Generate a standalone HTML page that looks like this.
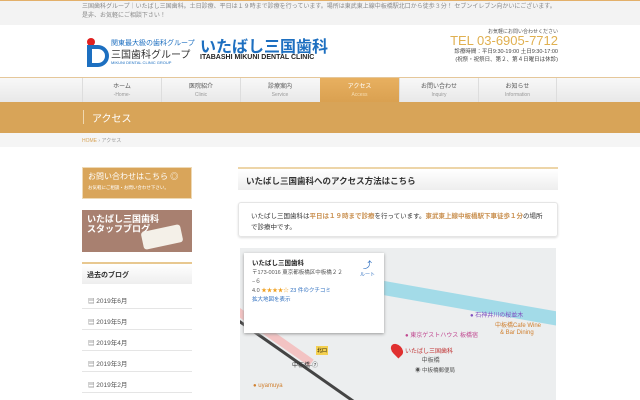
<!DOCTYPE html>
<html style="overflow:hidden"><head><meta charset="utf-8"><style>
*{margin:0;padding:0;box-sizing:border-box}
html,body{width:640px;height:400px;overflow:hidden}
body{background:#fff;font-family:"Liberation Sans","Noto Sans CJK JP",sans-serif;position:relative}
.a{position:absolute}
.top{left:0;top:0;width:640px;height:25px;background:#f3f3f3;font-size:6px;color:#888;padding:3px 0 0 82px;line-height:9px}
.nav{left:0;top:77px;width:640px;height:25px;background:linear-gradient(#f8f8f8,#e8e8e8);border-top:1px solid #e5c79a}
.ni{position:absolute;top:0;width:79px;height:25px;border-left:1px solid #ddd;text-align:center;font-size:6px;color:#555;padding-top:5px;line-height:8px}
.ni small{display:block;font-size:5px;color:#999}
.ban{left:0;top:102px;width:640px;height:31px;background:#d8a458}
.li{left:82px;width:110px;height:21px;border-bottom:1px solid #e5e5e5;font-size:6.5px;color:#555;padding:7px 0 0 6px}
</style></head><body>
<div class="a top">三国歯科グループ｜いたばし三国歯科。土日診療、平日は１９時まで診療を行っています。場所は東武東上線中板橋駅北口から徒歩３分！ セブンイレブン向かいにございます。<br>是非、お気軽にご相談下さい！</div>
<div class="a" style="left:0;top:0;width:640px;height:1px;background:#e3b06a"></div>
<div class="a" style="left:87px;top:38px;width:8px;height:8px;border-radius:50%;background:#e02020"></div>
<div class="a" style="left:87px;top:45px;width:22px;height:22px;border:4px solid #1d6fc0;border-radius:0 11px 11px 0;border-left-width:5px"></div>
<div class="a" style="left:111px;top:38px;font-size:7px;color:#1d6fc0">関東最大級の歯科グループ</div>
<div class="a" style="left:111px;top:46px;font-size:10px;color:#333">三国歯科グループ</div>
<div class="a" style="left:111px;top:60px;font-size:4px;color:#1d6fc0">MIKUNI DENTAL CLINIC GROUP</div>
<div class="a" style="left:200px;top:33px;font-size:16px;font-weight:bold;color:#1d6fc0">いたばし三国歯科</div>
<div class="a" style="left:200px;top:54px;font-size:7px;font-weight:bold;color:#222">ITABASHI MIKUNI DENTAL CLINIC</div>
<div class="a" style="left:470px;top:28px;width:88px;text-align:right;font-size:5px;color:#555">お気軽にお問い合わせください</div>
<div class="a" style="left:430px;top:33px;width:128px;text-align:right;font-size:13px;color:#e0b050">TEL 03-6905-7712</div>
<div class="a" style="left:420px;top:48px;width:138px;text-align:right;font-size:5.5px;color:#444;line-height:8px">診療時間：平日9:30-19:00 土日9:30-17:00<br>(祝祭・祝祭日、第２、第４日曜日は休診)</div>
<div class="a nav">
<div class="ni" style="left:82px">ホーム<small>-Home-</small></div>
<div class="ni" style="left:161px">医院紹介<small>Clinic</small></div>
<div class="ni" style="left:240px">診療案内<small>Service</small></div>
<div class="ni" style="left:320px;background:linear-gradient(#e8b060,#d9a050);color:#fff;border:0">アクセス<small style="color:#f6dcb0">Access</small></div>
<div class="ni" style="left:399px">お問い合わせ<small>Inquiry</small></div>
<div class="ni" style="left:478px;border-right:1px solid #ddd">お知らせ<small>Information</small></div>
</div>
<div class="a ban"></div>
<div class="a" style="left:83px;top:110px;width:1px;height:14px;background:#f0d8b0"></div>
<div class="a" style="left:92px;top:110px;font-size:10px;color:#fff">アクセス</div>
<div class="a" style="left:0;top:133px;width:640px;height:14px;background:#f5f5f5"></div>
<div class="a" style="left:82px;top:137px;font-size:5px;color:#999"><span style="color:#d8a458">HOME</span> › アクセス</div>
<div class="a" style="left:82px;top:167px;width:110px;height:32px;background:#d9a55a;border:1px solid #eed9b5;color:#fff;padding:4px 5px;font-size:8px;line-height:10px">お問い合わせはこちら ◎<br><span style="font-size:4.5px">お気軽にご相談・お問い合わせ下さい。</span></div>
<div class="a" style="left:82px;top:210px;width:110px;height:42px;background:#a88070;color:#fff;padding:4px 5px;font-size:9px;line-height:10px;font-weight:bold;overflow:hidden">いたばし三国歯科<br>スタッフブログ
<div class="a" style="left:60px;top:18px;width:40px;height:18px;background:#f4f0e8;border-radius:3px;transform:rotate(-12deg)"></div></div>
<div class="a" style="left:82px;top:262px;width:110px;height:22px;background:linear-gradient(#fff,#eee);border-top:2px solid #e8c890;font-size:7px;font-weight:bold;color:#333;padding:6px 5px">過去のブログ</div>
<div class="a li" style="top:288px">▤ 2019年6月</div>
<div class="a li" style="top:309px">▤ 2019年5月</div>
<div class="a li" style="top:330px">▤ 2019年4月</div>
<div class="a li" style="top:351px">▤ 2019年3月</div>
<div class="a li" style="top:372px">▤ 2019年2月</div>
<div class="a" style="left:238px;top:167px;width:320px;height:23px;background:linear-gradient(#fff,#eee);border-top:2px solid #edd5a8;font-size:8.5px;font-weight:bold;color:#333;padding:6px 8px">いたばし三国歯科へのアクセス方法はこちら</div>
<div class="a" style="left:238px;top:202px;width:320px;height:35px;border:1px solid #e5e5e5;border-radius:3px;box-shadow:0 1px 2px #ddd;font-size:6.5px;color:#333;padding:8px 12px;line-height:11px">いたばし三国歯科は<b style="color:#c99050">平日は１９時まで診療</b>を行っています。<b style="color:#c99050">東武東上線中板橋駅下車徒歩１分</b>の場所で診療中です。</div>
<div class="a" style="left:240px;top:248px;width:316px;height:152px;background:#eceeef;overflow:hidden">
<div class="a" style="left:120px;top:50px;width:240px;height:14px;background:#a3dbe8;transform:rotate(10deg)"></div>
<div class="a" style="width:200px;height:3px;background:#444;transform:rotate(35deg);transform-origin:0 0;top:72px;left:0"></div>
<div class="a" style="left:0;top:60px;width:90px;height:8px;background:#f3c3c3;transform:rotate(35deg);transform-origin:0 0"></div>
<div class="a" style="left:165px;top:82px;font-size:6px;color:#c04890">● 東京ゲストハウス 板橋宿</div>
<div class="a" style="left:73px;top:70px;font-size:6px;color:#3070c0;line-height:7px">● BOOKOFF 中<br>&nbsp;&nbsp;板橋駅北口店</div>
<div class="a" style="left:152px;top:95px;width:10px;height:14px;background:#e03030;border-radius:50% 50% 50% 0;transform:rotate(-45deg)"></div>
<div class="a" style="left:165px;top:100px;font-size:6px;color:#c03030;line-height:9px">いたばし三国歯科<br>&nbsp;&nbsp;&nbsp;&nbsp;&nbsp;&nbsp;&nbsp;&nbsp;&nbsp;&nbsp;<span style="color:#555">中板橋</span></div>
<div class="a" style="left:175px;top:118px;font-size:5.5px;color:#555">◉ 中板橋郵便局</div>
<div class="a" style="left:230px;top:62px;font-size:6px;color:#8050c0">● 石神井川の桜並木</div>
<div class="a" style="left:255px;top:75px;font-size:6px;color:#d08030;line-height:7px">中板橋Cafe Wine<br>&nbsp;&nbsp;&nbsp;& Bar Dining</div>
<div class="a" style="left:76px;top:98px;font-size:5px;background:#f4d050;padding:1px">北口</div>
<div class="a" style="left:52px;top:112px;font-size:6px;color:#333">中板橋-⑦</div>
<div class="a" style="left:13px;top:135px;font-size:6px;color:#d08030">● uyamuya</div>
<div class="a" style="left:4px;top:5px;width:140px;height:80px;background:#fff;box-shadow:0 1px 3px #999;padding:6px 8px;font-size:5.5px;color:#555;line-height:9px"><b style="font-size:6.5px;color:#222">いたばし三国歯科</b><br>〒173-0016 東京都板橋区中板橋２２<br>−６<br>4.0 <span style="color:#f0a020">★★★★☆</span> <span style="color:#3070c0">23 件のクチコミ</span><br><span style="color:#3070c0">拡大地図を表示</span>
<div class="a" style="left:116px;top:8px;color:#3070c0;font-size:5px;text-align:center;line-height:8px"><span style="font-size:9px">⤴</span><br>ルート</div></div>
</div>
</body></html>
